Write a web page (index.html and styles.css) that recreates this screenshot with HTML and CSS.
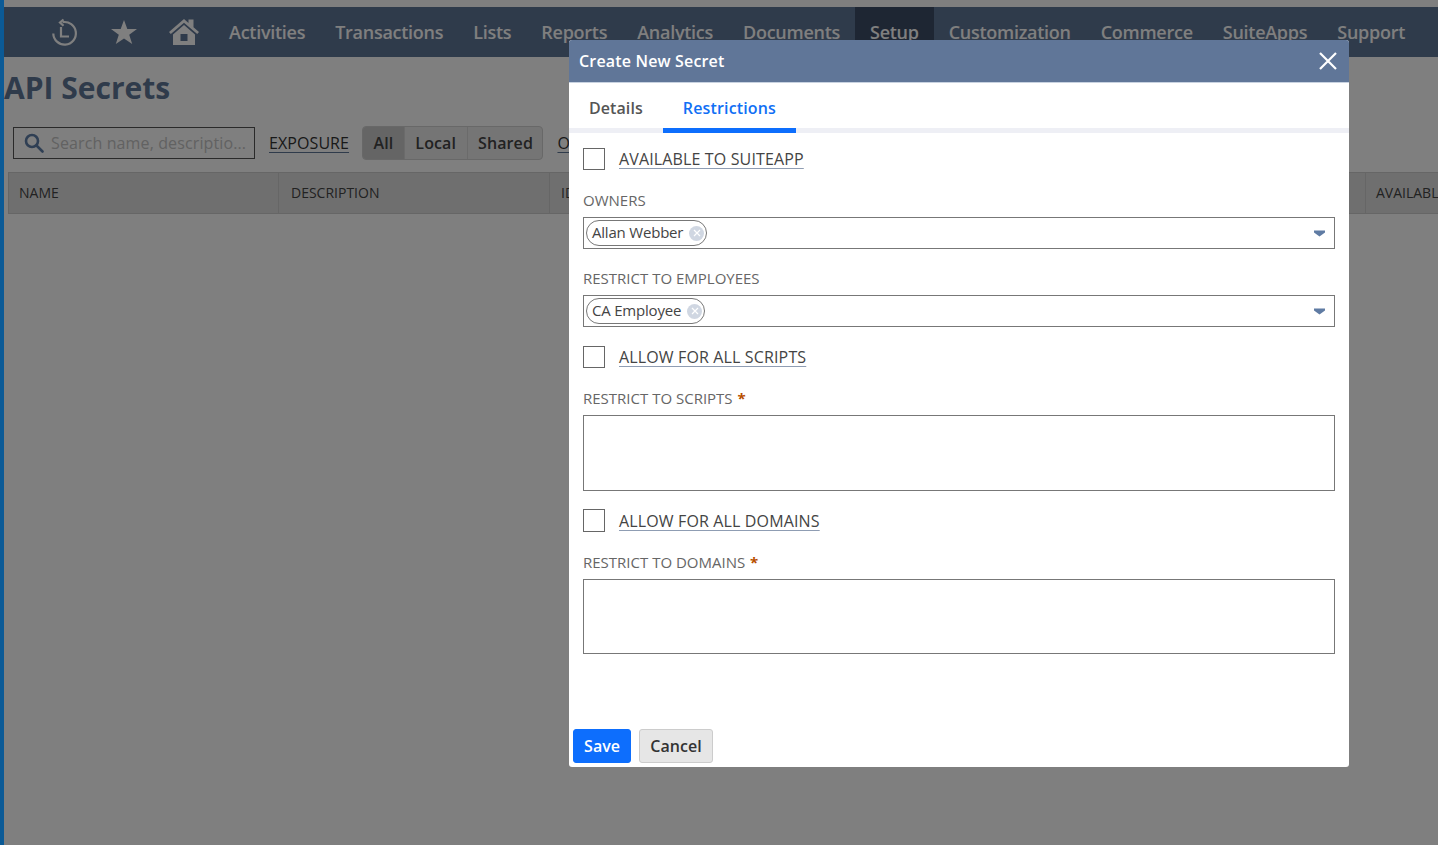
FILE: index.html
```html
<!DOCTYPE html>
<html lang="en">
<head>
<meta charset="utf-8">
<title>API Secrets</title>
<link rel="stylesheet" href="styles.css">
</head>
<body>
<div class="page">
  <div class="topstrip"></div>
  <nav class="nav">
    <span class="nav-icon">
      <svg width="30" height="30" viewBox="0 0 30 30" fill="none" stroke="currentColor" stroke-width="2.200"><path d="M13.500 5.200A11.300 11.300 0 1 1 4.300 16.500"/><path d="M14.500 2.500 11 5.500l3.500 3.200" stroke-width="2.200"/><path d="M12 10v9.500h8"/></svg>
    </span>
    <span class="nav-icon">
      <svg width="28" height="28" viewBox="0 0 28 28" fill="currentColor"><path d="M14 2l3.300 8.900h9.700l-7.800 5.800 3 9.300L14 20.400 5.800 26l3-9.300L1 10.900h9.700z"/></svg>
    </span>
    <span class="nav-icon">
      <svg width="30" height="30" viewBox="0 0 30 30" fill="currentColor"><path d="M15 2 0 15l1.800 2.100L15 5.800l13.200 11.300L30 15l-5.500-4.800V2.500h-5v3.400z"/><path d="M15 8 4 17.500V28h22V17.500zm-3.500 9h7v7h-7z" fill-rule="evenodd"/></svg>
    </span>
    <a class="nav-item">Activities</a>
    <a class="nav-item">Transactions</a>
    <a class="nav-item">Lists</a>
    <a class="nav-item">Reports</a>
    <a class="nav-item">Analytics</a>
    <a class="nav-item">Documents</a>
    <a class="nav-item nav-current">Setup</a>
    <a class="nav-item">Customization</a>
    <a class="nav-item">Commerce</a>
    <a class="nav-item">SuiteApps</a>
    <a class="nav-item">Support</a>
  </nav>
  <h1 class="page-title">API Secrets</h1>
  <div class="toolbar">
    <div class="search">
      <svg width="20" height="20" viewBox="0 0 20 20" fill="none" stroke="#5f7ea8" stroke-width="2.600"><circle cx="8" cy="8" r="6"/><path d="m12.500 12.500 6 6" stroke-linecap="round"/></svg>
      <span class="search-text">Search name, descriptio...</span>
    </div>
    <span class="filter-label">EXPOSURE</span>
    <div class="segment">
      <span class="segment-item segment-active">All</span>
      <span class="segment-item">Local</span>
      <span class="segment-item">Shared</span>
    </div>
    <span class="filter-label">OWNERS</span>
  </div>
  <div class="table-head">
    <div class="th">NAME</div>
    <div class="th">DESCRIPTION</div>
    <div class="th">ID</div>
    <div class="th">AVAILABLE TO SUITEAPP</div>
  </div>
</div>
<div class="overlay"></div>
<div class="stripe"></div>
<section class="dialog">
  <header class="dialog-head">
    <span class="dialog-title">Create New Secret</span>
    <svg class="dialog-close" width="18" height="18" viewBox="0 0 18 18" stroke="#fff" stroke-width="2.200"><path d="m1 1 16 16M17 1 1 17"/></svg>
  </header>
  <div class="tabs">
    <span class="tab">Details</span>
    <span class="tab tab-active">Restrictions</span>
  </div>
  <div class="form">
    <label class="check check-first"><span class="box"></span><span class="check-text">AVAILABLE TO SUITEAPP</span></label>
    <div class="field-label label-owners">OWNERS</div>
    <div class="select">
      <span class="pill">Allan Webber<span class="pill-x"><svg width="8" height="8" viewBox="0 0 8 8" stroke="#fff" stroke-width="1.200"><path d="m1 1 6 6M7 1 1 7"/></svg></span></span>
      <svg class="caret" width="11" height="7" viewBox="0 0 11 7" fill="#5f7ba3"><path d="M0 .5h11V2.500L5.500 6.500 0 2.500z"/></svg>
    </div>
    <div class="field-label label-employees">RESTRICT TO EMPLOYEES</div>
    <div class="select">
      <span class="pill">CA Employee<span class="pill-x"><svg width="8" height="8" viewBox="0 0 8 8" stroke="#fff" stroke-width="1.200"><path d="m1 1 6 6M7 1 1 7"/></svg></span></span>
      <svg class="caret" width="11" height="7" viewBox="0 0 11 7" fill="#5f7ba3"><path d="M0 .5h11V2.500L5.500 6.500 0 2.500z"/></svg>
    </div>
    <label class="check check-scripts"><span class="box"></span><span class="check-text">ALLOW FOR ALL SCRIPTS</span></label>
    <div class="field-label label-scripts">RESTRICT TO SCRIPTS <span class="req">*</span></div>
    <div class="area"></div>
    <label class="check check-domains"><span class="box"></span><span class="check-text">ALLOW FOR ALL DOMAINS</span></label>
    <div class="field-label label-domains">RESTRICT TO DOMAINS <span class="req">*</span></div>
    <div class="area area-domains"></div>
  </div>
  <footer class="dialog-foot">
    <button class="btn btn-primary">Save</button>
    <button class="btn btn-secondary">Cancel</button>
  </footer>
</section>
</body>
</html>
```
FILE: styles.css
```css
* { box-sizing: border-box; }
html, body { margin: 0; height: 100%; overflow: hidden; }
body { font-family: "Open Sans", "Noto Sans", sans-serif; color: #333; background: #fff; }

.page { width: 1438px; height: 845px; padding-left: 4px; overflow: hidden; }
.topstrip { height: 7px; margin-left: -4px; background: #fff; }

.nav { height: 50px; margin-left: -4px; padding-left: 49px; display: flex; align-items: stretch; background: #5f7696; }
.nav-icon { display: flex; align-items: center; justify-content: center; width: 30px; margin-right: 30px; color: #fff; }
.nav-item { padding: 0 15px; font-size: 18px; font-weight: 600; line-height: 50px; letter-spacing: -.27px; color: #fff; white-space: nowrap; }
.nav-icon + .nav-item { margin-left: -15px; }
.nav-current { background: #3c4c66; }

.page-title { margin: 10px 0 0; font-size: 30px; line-height: 42px; font-weight: 700; color: #5f7696; }

.toolbar { display: flex; align-items: center; margin: 17px 0 0 9px; height: 34px; white-space: nowrap; }
.search { width: 242px; height: 32px; display: flex; align-items: center; gap: 7px; padding-left: 10px; border: 1px solid #555; font-size: 16px; letter-spacing: .12px; color: #c4c4c4; }
.filter-label { margin-left: 14px; font-size: 16px; letter-spacing: .08px; line-height: 20px; color: #333; text-decoration: underline; text-decoration-color: #5f7696; text-decoration-thickness: 1px; text-underline-offset: 3px; }
.segment { display: flex; height: 34px; margin-left: 13px; border: 1px solid #d0d0d0; border-radius: 4px; overflow: hidden; background: #ebebeb; font-size: 16px; font-weight: 600; letter-spacing: .1px; color: #444; }
.segment-item { padding: 0 10.5px; line-height: 32px; border-left: 1px solid #d6d6d6; }
.segment-item:first-child { border-left: 0; }
.segment-item:last-child { padding-right: 9.5px; }
.segment-active { background: #cbcbcb; }

.table-head { display: grid; grid-template-columns: 269px 271px 816px 1fr; margin: 12px 0 0 4px; width: 1500px; height: 42px; background: #dfdfdf; border: 1px solid #ccc; border-right: 0; font-size: 14px; font-weight: 500; color: #444; }
.th { padding-left: 11px; line-height: 40px; white-space: nowrap; border-left: 1px solid #ccc; }
.th:first-child { padding-left: 10px; border-left: 0; }
.th:nth-child(2) { padding-left: 12px; }
.th:last-child { padding-left: 10px; }

.overlay { position: absolute; inset: 0; background: rgba(0, 0, 0, .5); }
.stripe { position: absolute; left: 0; top: 0; bottom: 0; width: 4px; background: #0b5a96; }

.dialog { position: absolute; left: 569px; top: 40px; width: 780px; height: 727px; display: flex; flex-direction: column; background: #fff; border-radius: 3px; overflow: hidden; }
.dialog-head { flex: none; height: 43px; padding: 0 12px 1px 10px; display: flex; align-items: center; justify-content: space-between; background: #607698; border-bottom: 1px solid #c8d2e0; }
.dialog-title { font-size: 16px; font-weight: 600; letter-spacing: .17px; color: #fff; }
.tabs { flex: none; height: 50px; display: flex; border-bottom: 5px solid #eeeff5; }
.tab { height: 50px; padding: 0 20px; font-size: 16px; font-weight: 600; line-height: 50px; letter-spacing: .08px; color: #555; }
.tab-active { letter-spacing: .15px; color: #106ff5; border-bottom: 5px solid #0d6efd; }

.form { flex: 1; display: flex; flex-direction: column; padding: 15px 14px 0; color: #555; font-size: 16px; }
.check { display: flex; align-items: center; gap: 14px; height: 22px; }
.check-scripts { margin-top: 19px; }
.check-domains { margin-top: 18px; height: 23px; }
.box { width: 22px; height: 100%; border: 1px solid #666; }
.check-text { line-height: 20px; letter-spacing: .14px; color: #444; text-decoration: underline; text-decoration-color: #8f9db3; text-decoration-thickness: 1px; text-underline-offset: 3px; }
.check-domains .check-text { padding-top: 1px; }
.field-label { font-size: 15px; line-height: 20px; margin-bottom: 7px; color: #666; }
.label-owners { margin-top: 20px; }
.label-employees { margin-top: 19px; }
.label-scripts { margin-top: 20px; }
.label-domains { margin-top: 20px; }
.req { margin-left: 1px; color: #b84f00; font-weight: 700; }
.select { height: 32px; display: flex; align-items: center; justify-content: space-between; padding: 0 9px 0 2px; border: 1px solid #777; }
.pill { display: flex; align-items: center; gap: 6px; height: 26px; padding: 0 2px 2px 5px; border: 1px solid #777; border-radius: 13px; font-size: 15px; letter-spacing: -.2px; color: #444; }
.pill-x { width: 15px; height: 15px; margin-top: 2px; display: flex; align-items: center; justify-content: center; border-radius: 50%; background: #d0d7e2; }
.area { height: 76px; border: 1px solid #777; }
.area-domains { height: 75px; }

.dialog-foot { flex: none; display: flex; gap: 8px; padding: 0 0 4px 4px; }
.btn { height: 34px; padding: 0 10px; border-radius: 3px; font-family: inherit; font-size: 16px; font-weight: 600; letter-spacing: .08px; }
.btn-primary { border: 1px solid #0d6efd; background: #0d6efd; color: #fff; }
.btn-secondary { border: 1px solid #ccc; background: #e6e6e6; color: #333; }
```
